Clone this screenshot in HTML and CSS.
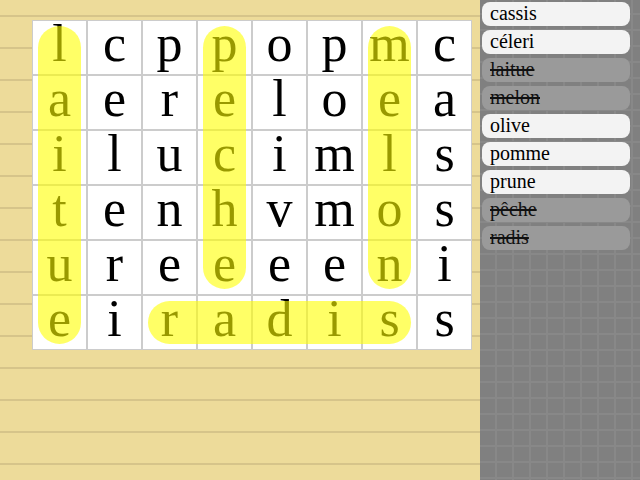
FILE: index.html
```html
<!DOCTYPE html>
<html>
<head>
<meta charset="utf-8">
<link rel="stylesheet" href="styles.css">
</head>
<body>
<div class="page">
  <main class="paper">
    <div class="board">
      <div class="grid">
        <div class="cell">l</div><div class="cell">c</div><div class="cell">p</div><div class="cell">p</div><div class="cell">o</div><div class="cell">p</div><div class="cell">m</div><div class="cell">c</div>
        <div class="cell">a</div><div class="cell">e</div><div class="cell">r</div><div class="cell">e</div><div class="cell">l</div><div class="cell">o</div><div class="cell">e</div><div class="cell">a</div>
        <div class="cell">i</div><div class="cell">l</div><div class="cell">u</div><div class="cell">c</div><div class="cell">i</div><div class="cell">m</div><div class="cell">l</div><div class="cell">s</div>
        <div class="cell">t</div><div class="cell">e</div><div class="cell">n</div><div class="cell">h</div><div class="cell">v</div><div class="cell">m</div><div class="cell">o</div><div class="cell">s</div>
        <div class="cell">u</div><div class="cell">r</div><div class="cell">e</div><div class="cell">e</div><div class="cell">e</div><div class="cell">e</div><div class="cell">n</div><div class="cell">i</div>
        <div class="cell">e</div><div class="cell">i</div><div class="cell">r</div><div class="cell">a</div><div class="cell">d</div><div class="cell">i</div><div class="cell">s</div><div class="cell">s</div>
      </div>
      <div class="mark mark-laitue"></div>
      <div class="mark mark-peche"></div>
      <div class="mark mark-melon"></div>
      <div class="mark mark-radis"></div>
    </div>
  </main>
  <aside class="panel">
    <div class="word">cassis</div>
    <div class="word">céleri</div>
    <div class="word found">laitue</div>
    <div class="word found">melon</div>
    <div class="word">olive</div>
    <div class="word">pomme</div>
    <div class="word">prune</div>
    <div class="word found">pêche</div>
    <div class="word found">radis</div>
  </aside>
</div>
</body>
</html>
```
FILE: styles.css
```css
html, body {
  margin: 0;
  padding: 0;
}
body {
  width: 640px;
  height: 480px;
  overflow: hidden;
}
.page {
  display: flex;
  width: 640px;
  height: 480px;
}
.paper {
  width: 480px;
  height: 480px;
  background-color: #eddb9a;
  background-image: repeating-linear-gradient(to bottom,
    transparent 0px, transparent 15px,
    #d6c48a 15px, #d6c48a 17px,
    transparent 17px, transparent 32px);
  padding: 20px 0 0 32px;
  box-sizing: border-box;
}
.board {
  position: relative;
  width: 440px;
}
.grid {
  display: grid;
  grid-template-columns: repeat(8, 55px);
  grid-auto-rows: 55px;
  width: 440px;
}
.cell {
  background: #ffffff;
  border: 1px solid #cccccc;
  box-sizing: border-box;
  font-family: "Liberation Serif", serif;
  font-size: 52px;
  line-height: 46px;
  text-align: center;
  color: #000;
}
.mark {
  position: absolute;
  background: rgba(255, 255, 0, 0.6);
  border-radius: 22px;
}
.mark-laitue {
  left: 6px;
  top: 6px;
  width: 43px;
  height: 318px;
}
.mark-peche {
  left: 171px;
  top: 6px;
  width: 43px;
  height: 263px;
}
.mark-melon {
  left: 336px;
  top: 6px;
  width: 43px;
  height: 263px;
}
.mark-radis {
  left: 116px;
  top: 281px;
  width: 263px;
  height: 43px;
}
.panel {
  width: 160px;
  height: 480px;
  background-color: #808080;
  background-image:
    repeating-linear-gradient(to right, transparent 0px, transparent 15px, #888888 15px, #888888 17px),
    repeating-linear-gradient(to bottom, transparent 0px, transparent 13px, #888888 13px, #888888 15px, transparent 15px, transparent 16px);
  padding: 2px 10px 0 2px;
  box-sizing: border-box;
  display: flex;
  flex-direction: column;
  gap: 4px;
}
.word {
  height: 24px;
  background: #f3f3f3;
  border-radius: 8px;
  font-family: "Liberation Serif", serif;
  font-size: 20px;
  line-height: 22px;
  padding-left: 8px;
  color: #000;
}
.word.found {
  background: #9a9a9a;
  text-decoration: line-through;
  color: #111;
}
```
